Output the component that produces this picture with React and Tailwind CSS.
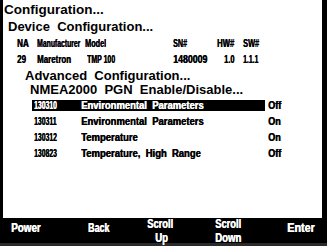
const pgns = [
  { code: '130310', name: 'Environmental  Parameters', state: 'Off', selected: true },
  { code: '130311', name: 'Environmental  Parameters', state: 'On' },
  { code: '130312', name: 'Temperature', state: 'On' },
  { code: '130823', name: 'Temperature,  High  Range', state: 'Off' },
];

const font = { fontFamily: '"Liberation Sans", Arial, sans-serif' };

// squeezed text, the panel font is a narrow bitmap face
function Sq({ c, children }) {
  return <span className={`inline-block origin-left whitespace-pre [text-shadow:0.5px_0_0_currentColor] ${c}`}>{children}</span>;
}

export default function App() {
  return (
    <div className="w-[327px] h-[246px] bg-black flex flex-col overflow-hidden font-bold" style={font}>
      {/* Screen */}
      <div className="h-[218px] ml-[3px] mr-[5px] bg-white text-black flex flex-col whitespace-pre">
        <div className="h-[19px] pl-[1px] text-[13.5px] leading-[19px]">Configuration...</div>
        <div className="h-[15px] pl-[5px] text-[13px] leading-[15px]">Device  Configuration...</div>

        <div className="h-[18px] pl-[14px] grid grid-cols-[20px_48px_88px_44px_26px_auto] items-center text-[11px] leading-[18px]">
          <Sq c="scale-x-[0.73]">NA</Sq>
          <Sq c="scale-x-[0.62]">Manufacturer</Sq>
          <Sq c="scale-x-[0.66]">Model</Sq>
          <Sq c="scale-x-[0.65]">SN#</Sq>
          <Sq c="scale-x-[0.7]">HW#</Sq>
          <Sq c="scale-x-[0.67]">SW#</Sq>
        </div>
        <div className="h-[14px] pl-[14px] grid grid-cols-[20px_48px_88px_44px_26px_auto] items-center text-[11px] leading-[14px]">
          <Sq c="scale-x-[0.73]">29</Sq>
          <Sq c="scale-x-[0.72]">Maretron</Sq>
          <span className="pl-[2px]"><Sq c="scale-x-[0.63]">TMP 100</Sq></span>
          <Sq c="scale-x-[0.8]">1480009</Sq>
          <span className="pl-[7px]"><Sq c="scale-x-[0.68]">1.0</Sq></span>
          <Sq c="scale-x-[0.62]">1.1.1</Sq>
        </div>

        <div className="h-[14px] mt-[3px] pl-[22px] text-[13px] leading-[14px]">Advanced  Configuration...</div>
        <div className="h-[14px] pl-[27px] text-[13px] leading-[14px]">NMEA2000  PGN  Enable/Disable...</div>

        <div className="flex flex-col">
          {pgns.map((p) => (
            <div key={p.code} className="h-[16px] pl-[29px] pt-[3px] flex items-start text-[11px] leading-[11px]">
              <div className={`w-[233px] h-[11px] flex items-center ${p.selected ? 'bg-black text-white' : ''}`}>
                <span className="w-[49px] pl-[2px]"><Sq c="scale-x-[0.62]">{p.code}</Sq></span>
                <Sq c="scale-x-[0.86]">{p.name}</Sq>
              </div>
              <span className="pl-[3px] h-[11px] flex items-center"><Sq c="scale-x-[0.82]">{p.state}</Sq></span>
            </div>
          ))}
        </div>
      </div>

      {/* Soft keys */}
      <div className="h-[28px] flex items-center text-white text-[12px] leading-[14px] border-b-[3px] border-[#2a2a2a]">
        <span className="w-[88px] pl-[11px] self-start mt-[3px]"><Sq c="scale-x-[0.82]">Power</Sq></span>
        <span className="w-[59px] self-start mt-[3px]"><Sq c="scale-x-[0.74]">Back</Sq></span>
        <span className="w-[68px] flex flex-col">
          <Sq c="scale-x-[0.78]">Scroll</Sq>
          <span className="pl-[8px]"><Sq c="scale-x-[0.8]">Up</Sq></span>
        </span>
        <span className="w-[72px] flex flex-col">
          <Sq c="scale-x-[0.78]">Scroll</Sq>
          <Sq c="scale-x-[0.8]">Down</Sq>
        </span>
        <span className="self-start mt-[3px]"><Sq c="scale-x-[0.9]">Enter</Sq></span>
      </div>
    </div>
  );
}
